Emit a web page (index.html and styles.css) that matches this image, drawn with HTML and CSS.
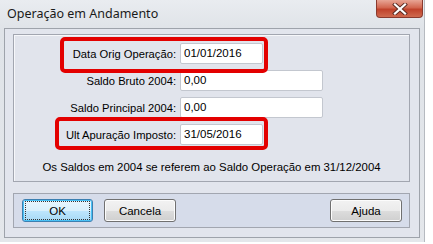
FILE: index.html
```html
<!DOCTYPE html>
<html lang="pt">
<head>
    <meta charset="UTF-8">
    <title>Operação em Andamento</title>
    <link rel="stylesheet" href="styles.css">
</head>
<body>

<div class="window">
    <!-- Title bar -->
    <div class="titlebar">
        <span class="title">Operação em Andamento</span>
        <div class="close-btn">
            <svg width="16" height="12" viewBox="0 0 16 12">
                <path d="M3 1.5 L13 10.5 M13 1.5 L3 10.5" stroke="#5a2a22" stroke-width="4" stroke-linecap="square"/>
                <path d="M3 1.5 L13 10.5 M13 1.5 L3 10.5" stroke="#fff" stroke-width="2.2" stroke-linecap="square"/>
            </svg>
        </div>
    </div>

    <div class="client">
        <!-- Main fields panel -->
        <div class="panel">
            <div class="fields">
                <label class="label">Data Orig Operação:</label>
                <div class="input short">01/01/2016</div>

                <label class="label">Saldo Bruto 2004:</label>
                <div class="input long">0,00</div>

                <label class="label">Saldo Principal 2004:</label>
                <div class="input long">0,00</div>

                <label class="label">Ult Apuração Imposto:</label>
                <div class="input short">31/05/2016</div>
            </div>

            <p class="note">Os Saldos em 2004 se referem ao Saldo Operação em 31/12/2004</p>

            <!-- red annotation marks -->
            <div class="mark mark-1"></div>
            <div class="mark mark-2"></div>
        </div>

        <!-- Buttons panel -->
        <div class="button-bar">
            <button class="btn btn-ok"><span>OK</span></button>
            <button class="btn">Cancela</button>
            <button class="btn btn-help">Ajuda</button>
        </div>
    </div>
</div>

</body>
</html>
```

FILE: styles.css
```css
body {
    margin: 0;
    padding: 0;
    background: #fff;
    font-family: 'Liberation Sans', Arial, sans-serif;
    font-size: 11px;
    color: #000;
}

.window {
    width: 425px;
    height: 242px;
    box-sizing: border-box;
    padding: 0 4px 4px 4px;
    background: linear-gradient(#e9ecf0, #dfe3e8 30px, #e4e7eb);
    border-right: 1px solid #b6bac0;
    display: flex;
    flex-direction: column;
}

.titlebar {
    height: 28px;
    display: flex;
    align-items: flex-start;
    justify-content: space-between;
}

.title {
    font-family: 'Noto Sans', sans-serif;
    font-size: 12.5px;
    color: #1a1a1a;
    padding: 5px 0 0 3px;
}

.close-btn {
    width: 47px;
    height: 18px;
    margin-right: -3px;
    box-sizing: border-box;
    border: 1px solid #8a3a2e;
    border-top: none;
    border-radius: 0 0 4px 4px;
    background: linear-gradient(#e8a595, #d2664f 45%, #c0422b 55%, #cf6a4f);
    display: flex;
    align-items: center;
    justify-content: center;
}

.client {
    flex: 1;
    background: #e2e5ed;
    border: 1px solid #9ea3ab;
    padding: 5px 9px 9px 8px;
    display: flex;
    flex-direction: column;
}

.panel {
    position: relative;
    height: 146px;
    border: 1px solid #a2a6b0;
    box-shadow: inset 1px 1px 0 #f6f7fa;
    background: #e1e4ec;
}

.fields {
    display: grid;
    grid-template-columns: 162px auto;
    column-gap: 4px;
    row-gap: 6px;
    align-items: center;
    justify-items: start;
    margin-top: 8px;
}

.label {
    justify-self: end;
    font-size: 11.2px;
}

.input {
    height: 21px;
    box-sizing: border-box;
    background: #fff;
    border: 1px solid #c3c7cf;
    border-radius: 2px;
    padding: 3px 0 0 3px;
    font-size: 11.5px;
}

.short {
    width: 83px;
}

.long {
    width: 143px;
}

.note {
    margin: 16px 0 0 0;
    text-align: center;
    font-size: 11.4px;
}

/* red highlight marks drawn over the screenshot */
.mark {
    position: absolute;
    border: 4px solid #e30000;
    border-radius: 5px;
}

.mark-1 {
    left: 46px;
    top: 2px;
    width: 200px;
    height: 28px;
}

.mark-2 {
    left: 41px;
    top: 82px;
    width: 205px;
    height: 25px;
}

.button-bar {
    margin-top: 11px;
    height: 35px;
    box-sizing: border-box;
    border: 1px solid #a2a6b0;
    background: #d6dcea;
    display: flex;
    align-items: center;
    padding: 0 7px 0 8px;
    gap: 11px;
}

.btn {
    width: 72px;
    height: 23px;
    font-family: 'Liberation Sans', Arial, sans-serif;
    font-size: 11.5px;
    color: #000;
    border: 1px solid #707070;
    border-radius: 3px;
    background: linear-gradient(#f2f2f2, #ebebeb 50%, #dddddd 51%, #cfcfcf);
    box-shadow: inset 0 0 0 1px #fcfcfc;
    padding: 0;
}

.btn-ok {
    width: 71px;
    border-color: #3c7fb1;
    background: linear-gradient(#eaf6fd, #d9f0fc 50%, #bee6fd 51%, #a7d9f5);
    box-shadow: inset 0 0 0 1px #48c1f5;
}

.btn-ok span {
    display: flex;
    align-items: center;
    justify-content: center;
    height: 17px;
    margin: 0 2px;
    border: 1px dotted #333;
}

.btn-help {
    margin-left: auto;
}
```
